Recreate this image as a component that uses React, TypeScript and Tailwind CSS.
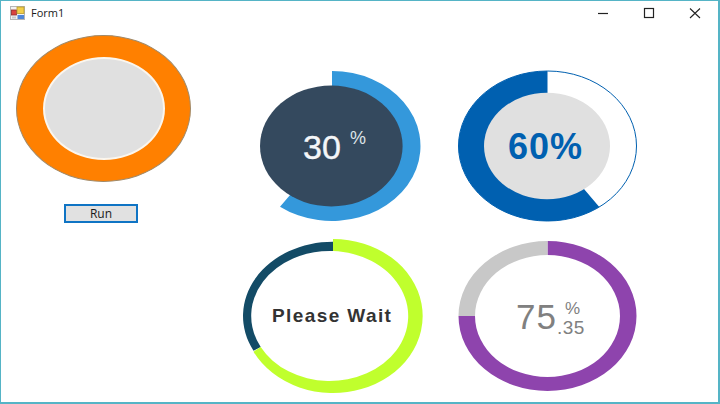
function FormIcon() {
  return (
    <svg width="16" height="14" viewBox="0 0 16 14" className="shrink-0">
      <rect x="0.5" y="0.5" width="14" height="13" fill="#f2f2f2" stroke="#b5b5b5" />
      <rect x="1.5" y="4" width="5" height="5" fill="#d9433f" stroke="#8e2a2a" strokeWidth="0.8" />
      <rect x="7" y="1" width="7" height="6.5" fill="#f2cf4a" stroke="#b89a2c" strokeWidth="0.8" />
      <rect x="7.5" y="9" width="6.5" height="4" fill="#4f86d8" />
      <rect x="2" y="10.5" width="4" height="2" fill="#c9c9c9" />
    </svg>
  )
}

function WindowButtons() {
  return (
    <div className="flex items-center">
      <svg width="46" height="20" viewBox="0 0 46 20">
        <path d="M18 10.5h10" stroke="#222" strokeWidth="1.2" />
      </svg>
      <svg width="46" height="20" viewBox="0 0 46 20">
        <rect x="18.5" y="5.5" width="9" height="9" fill="none" stroke="#222" strokeWidth="1.2" />
      </svg>
      <svg width="46" height="20" viewBox="0 0 46 20">
        <path d="M18 5.5l10 9.5M28 5.5l-10 9.5" stroke="#222" strokeWidth="1.1" />
      </svg>
    </div>
  )
}

function Gauge({ view, children, drawing }: { view: string; children: React.ReactNode; drawing: React.ReactNode }) {
  return (
    <div className="relative w-[190px] h-[156px]">
      <svg width="190" height="156" viewBox={view} className="block">
        {drawing}
      </svg>
      {children}
    </div>
  )
}

export default function App() {
  return (
    <div className="w-[720px] h-[404px] bg-white border-[#55b4c6] border-t border-l border-r-2 border-b-2 font-['Liberation_Sans',sans-serif] overflow-hidden">
      <div className="flex items-center justify-between h-[24px] pl-[9px]">
        <div className="flex items-center gap-[5px]">
          <FormIcon />
          <span className="font-['Open_Sans',sans-serif] text-[11px] text-[#1a1a1a]">Form1</span>
        </div>
        <WindowButtons />
      </div>

      <div className="flex pt-[2px]">
        <div className="w-[239px] flex flex-col pl-[15px] pt-[8px]">
          <div className="w-[175px] h-[147px] rounded-[50%] bg-[#ff8000] border border-[#a08a6a] flex items-center justify-center">
            <div className="w-[122px] h-[103px] rounded-[50%] bg-[#e0e0e0] border-2 border-[#fbf6ee]" />
          </div>
          <button className="mt-[22px] ml-[48px] w-[74px] h-[19px] bg-[#e1e1e1] border-2 border-[#0f74c4] font-['Open_Sans',sans-serif] text-[12px] leading-none text-[#1a1a1a]">
            Run
          </button>
        </div>

        <div className="grid grid-cols-[190px_190px] gap-x-[20px] gap-y-[12px] pt-[43px]">
          <Gauge
            view="240 70 190 156"
            drawing={
              <>
                <path d="M332 71A88.5 75 0 1 1 280 206.7L332 146Z" fill="#3498db" />
                <ellipse cx="331.3" cy="146" rx="71.3" ry="60.5" fill="#34495e" />
              </>
            }
          >
            <span className="absolute left-[63px] top-[58px] text-[34px] leading-[38px] text-[#f4f6f8] [-webkit-text-stroke:0.4px_#f4f6f8]">30</span>
            <span className="absolute left-[110px] top-[57px] text-[18px] leading-[22px] text-[#dfe4e8]">%</span>
          </Gauge>

          <Gauge
            view="450 70 190 156"
            drawing={
              <>
                <ellipse cx="547.5" cy="146" rx="89" ry="75" fill="#fff" stroke="#0060b0" strokeWidth="1" />
                <path d="M547.5 71A89 75 0 1 0 599.3 207L547.5 146Z" fill="#0060b0" />
                <ellipse cx="547" cy="146" rx="63" ry="53.3" fill="#e0e0e0" />
              </>
            }
          >
            <span className="absolute left-[58px] top-[57px] text-[36px] leading-[40px] font-bold tracking-[1px] text-[#0060b0]">60%</span>
          </Gauge>

          <Gauge
            view="240 238 190 156"
            drawing={
              <>
                <path
                  d="M333 241.7A90 74.3 0 0 0 253.5 350.8L260.7 347A78.5 65 0 0 1 333 251.06Z"
                  fill="#134b66"
                />
                <path
                  d="M333 239A89.7 77 0 1 1 253.5 351.7L260.7 347A78.5 65 0 1 0 333 251.06Z"
                  fill="#c0ff2d"
                />
              </>
            }
          >
            <span className="absolute left-[32px] top-[67px] text-[19px] leading-[22px] font-bold tracking-[1.4px] text-[#333]">Please Wait</span>
          </Gauge>

          <Gauge
            view="450 238 190 156"
            drawing={
              <>
                <path d="M547.5 241A89 75 0 1 1 458.5 316H475A72.5 61 0 1 0 547.5 255Z" fill="#8e44ad" />
                <path d="M547.5 241A89 75 0 0 0 458.5 316H475A72.5 61 0 0 1 547.5 255Z" fill="#c8c8c8" />
              </>
            }
          >
            <span className="absolute left-[66px] top-[60px] text-[35px] leading-[38px] tracking-[1px] text-[#808080]">75</span>
            <span className="absolute left-[115px] top-[63px] text-[17px] leading-[16px] text-[#808080]">%</span>
            <span className="absolute left-[107px] top-[82px] text-[19px] leading-[16px] tracking-[0.5px] text-[#808080]">.35</span>
          </Gauge>
        </div>
      </div>
    </div>
  )
}
